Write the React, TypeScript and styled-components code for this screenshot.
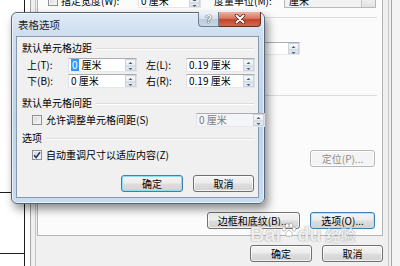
import styled, { createGlobalStyle } from "styled-components";

const GlobalStyle = createGlobalStyle`
  html, body {
    margin: 0;
    padding: 0;
    background: #f3f3f3;
  }
  body {
    font-family: "Noto Sans CJK SC", "Liberation Sans", sans-serif;
    font-size: 10px;
    line-height: 12px;
    color: #000;
  }
`;

const Screen = styled.div`
  position: relative;
  width: 400px;
  height: 266px;
  overflow: hidden;
  display: flex;
  background: #f3f3f3;
`;

/* word document showing at the left edge */
const DocTable = styled.div`
  width: 24px;
  border-right: 1px solid #1c1c1c;
  background: #fff;
`;

const DocCell = styled.div<{ $h: number }>`
  height: ${(p) => p.$h}px;
  border-bottom: 1px solid #1c1c1c;
`;

const DocGap = styled.div`
  width: 5px;
  background: #fff;
`;

/* table properties dialog behind */
const BgFrame = styled.div`
  flex: 1;
  display: flex;
  margin-right: 8px;
  padding: 0 2px 0 4px;
  border-left: 1px solid #a4a4a4;
  border-right: 1px solid #a4a4a4;
  background: #f0f0f0;
`;

const BgBody = styled.div`
  flex: 1;
  display: flex;
  flex-direction: column;
  padding: 0 5px 0 1px;
  border-left: 1px solid #c6c6c6;
  border-right: 1px solid #c6c6c6;
`;

const TabPage = styled.div`
  height: 235px;
  flex-shrink: 0;
  border: 1px solid #b4b4b4;
  border-top: none;
  background: #fbfbfb;
  display: flex;
  flex-direction: column;
`;

const BgRow = styled.div<{ $mt: number; $h: number }>`
  display: flex;
  align-items: center;
  flex-shrink: 0;
  margin-top: ${(p) => p.$mt}px;
  height: ${(p) => p.$h}px;
`;

const BgRule = styled.div<{ $mt: number }>`
  height: 1px;
  flex-shrink: 0;
  margin: ${(p) => p.$mt}px 5px 0 8px;
  background: #dcdcdc;
`;

const Label = styled.div<{ $ml?: number; $w?: number; $dim?: boolean }>`
  margin-left: ${(p) => p.$ml ?? 0}px;
  width: ${(p) => (p.$w ? `${p.$w}px` : "auto")};
  flex-shrink: 0;
  white-space: nowrap;
  color: ${(p) => (p.$dim ? "#8a8a8a" : "#000")};
`;

const Select = styled.div<{ $ml: number; $w: number }>`
  margin-left: ${(p) => p.$ml}px;
  width: ${(p) => p.$w}px;
  height: 14px;
  box-sizing: border-box;
  display: flex;
  border: 1px solid #b8b8b8;
  background: #f2f2f2;
  padding-left: 4px;
  align-items: center;
`;

const SelectArrow = styled.div`
  margin-left: auto;
  width: 13px;
  height: 100%;
  border-left: 1px solid #c4c4c4;
  background: linear-gradient(#f6f6f6, #e2e2e2);
`;

const Button = styled.div<{
  $ml?: number;
  $w: number;
  $kind?: "default" | "focus" | "disabled";
}>`
  margin-left: ${(p) => p.$ml ?? 0}px;
  width: ${(p) => p.$w}px;
  height: 17px;
  box-sizing: border-box;
  flex-shrink: 0;
  display: flex;
  align-items: center;
  justify-content: center;
  border-radius: 3px;
  white-space: nowrap;
  border: 1px solid
    ${(p) =>
      p.$kind === "default" || p.$kind === "focus"
        ? "#3c7fb1"
        : p.$kind === "disabled"
        ? "#b5b9bc"
        : "#707070"};
  color: ${(p) => (p.$kind === "disabled" ? "#8d8d8d" : "#000")};
  background: ${(p) =>
    p.$kind === "disabled"
      ? "#f4f4f4"
      : "linear-gradient(#f4f4f4 0%, #ececec 48%, #dedede 52%, #d2d2d2 100%)"};
  box-shadow: ${(p) =>
    p.$kind === "default"
      ? "inset 0 0 0 1px #8fdcf6"
      : p.$kind === "focus"
      ? "inset 0 0 0 1px #a8e6fa"
      : "inset 0 0 0 1px rgba(255,255,255,0.7)"};
`;

const BottomRow = styled.div`
  display: flex;
  justify-content: flex-end;
  gap: 10px;
  margin-top: 9px;
`;

/* the modal options dialog */
const Modal = styled.div`
  position: absolute;
  left: 11px;
  top: 12px;
  width: 254px;
  height: 192px;
  box-sizing: border-box;
  display: flex;
  flex-direction: column;
  border: 1px solid #56677a;
  border-radius: 6px;
  background: linear-gradient(
    180deg,
    #dfeaf6 0%,
    #cddeef 12%,
    #bed3ea 55%,
    #c9dcf0 100%
  );
  box-shadow: inset 0 0 0 1px rgba(255, 255, 255, 0.6),
    3px 5px 10px rgba(0, 0, 0, 0.45);
`;

const TitleBar = styled.div`
  height: 23px;
  flex-shrink: 0;
  display: flex;
  align-items: flex-start;
  padding-left: 6px;
`;

const Title = styled.div`
  margin-top: 6px;
  font-size: 10.5px;
  color: #1e1e1e;
`;

const HelpButton = styled.div`
  margin-left: auto;
  margin-top: -1px;
  width: 21px;
  height: 15px;
  box-sizing: border-box;
  border: 1px solid #6c7d90;
  border-top: none;
  border-radius: 0 0 0 4px;
  background: linear-gradient(#eef3f9 0%, #d5e0ec 50%, #bccbdc 52%, #c9d7e6 100%);
  display: flex;
  align-items: center;
  justify-content: center;
  font-family: "Liberation Sans", sans-serif;
  font-weight: bold;
  font-size: 11px;
  color: #fff;
  text-shadow: 0 0 1px #2d3a48, 0 0 1px #2d3a48;
`;

const CloseButton = styled.div`
  margin-top: -1px;
  margin-right: 3px;
  width: 42px;
  height: 15px;
  box-sizing: border-box;
  border: 1px solid #6b2a1f;
  border-top: none;
  border-left: none;
  border-radius: 0 0 4px 0;
  background: linear-gradient(#eab2a5 0%, #d8775f 45%, #c3432a 55%, #d26a4c 100%);
  display: flex;
  align-items: center;
  justify-content: center;
`;

const Client = styled.div`
  flex: 1;
  margin: 0 5px 5px 4px;
  border: 1px solid #8799ae;
  background: #f0f0f0;
  padding: 0 2px 0 5px;
  display: flex;
  flex-direction: column;
`;

const GroupHead = styled.div<{ $mt: number }>`
  display: flex;
  align-items: center;
  height: 12px;
  margin-top: ${(p) => p.$mt}px;
`;

const GroupLine = styled.div`
  flex: 1;
  height: 1px;
  margin: 1px 2px 0 4px;
  background: #d8dde2;
  border-bottom: 1px solid #fff;
`;

const Row = styled.div<{ $mt: number }>`
  display: flex;
  align-items: center;
  height: 14px;
  margin-top: ${(p) => p.$mt}px;
`;

const SpinBox = styled.div<{ $ml?: number; $w: number; $h?: number; $off?: boolean }>`
  margin-left: ${(p) => p.$ml ?? 0}px;
  width: ${(p) => p.$w}px;
  height: ${(p) => p.$h ?? 14}px;
  flex-shrink: 0;
  box-sizing: border-box;
  display: flex;
  align-items: stretch;
  border: 1px solid;
  border-color: #abadb3 #dbdfe6 #e3e9ef #e2e3ea;
  background: ${(p) => (p.$off ? "#f3f5f8" : "#fff")};
  color: ${(p) => (p.$off ? "#7c7c7c" : "#000")};
`;

const SpinText = styled.div`
  flex: 1;
  padding-left: 2px;
  white-space: nowrap;
  overflow: hidden;
  display: flex;
  align-items: center;
`;

const Selected = styled.span`
  background: #3399ff;
  color: #fff;
  padding: 0 1px;
  margin-right: 3px;
`;

const SpinArrows = styled.div`
  width: 11px;
  flex-shrink: 0;
  display: flex;
  box-sizing: border-box;
  border: 1px solid #cdd3da;
  background: linear-gradient(#f7f9fb, #dfe5ec);
`;

const CheckBox = styled.div<{ $ml: number }>`
  margin-left: ${(p) => p.$ml}px;
  width: 10px;
  height: 10px;
  flex-shrink: 0;
  box-sizing: border-box;
  border: 1px solid #8e8f8f;
  background: linear-gradient(135deg, #d3d3d3, #fbfbfb);
  box-shadow: inset 0 0 0 1px #f2f2f2;
  display: flex;
  align-items: center;
  justify-content: center;
`;

const ButtonRow = styled.div`
  display: flex;
  justify-content: flex-end;
  gap: 10px;
  margin-top: 13px;
  padding-right: 2px;
`;

const Watermark = styled.div`
  position: absolute;
  left: 250px;
  top: 222px;
  display: flex;
  align-items: flex-end;
  font-family: "Liberation Sans", sans-serif;
  font-weight: bold;
  font-size: 20px;
  line-height: 20px;
  color: rgba(255, 255, 255, 0.85);
  text-shadow: 0 0 1px rgba(90, 90, 90, 0.55), 0 0 2px rgba(120, 120, 120, 0.35);
`;

const WatermarkCjk = styled.span`
  margin-left: 4px;
  font-family: "Noto Sans CJK SC", sans-serif;
  font-size: 15px;
  line-height: 18px;
`;

const Spin = () => (
  <SpinArrows>
    <svg width="9" height="12" viewBox="0 0 9 12">
      <line x1="0" y1="6" x2="9" y2="6" stroke="#c7ced6" />
      <path d="M2.5 4 L4.5 2 L6.5 4 Z" fill="#4a5d80" />
      <path d="M2.5 8 L4.5 10 L6.5 8 Z" fill="#4a5d80" />
    </svg>
  </SpinArrows>
);

const Tick = () => (
  <svg width="8" height="8" viewBox="0 0 8 8">
    <path
      d="M1 4.2 L3.1 6.4 L7 1.2"
      fill="none"
      stroke="#1f3a86"
      strokeWidth="1.6"
    />
  </svg>
);

const Paw = () => (
  <svg width="16" height="16" viewBox="0 0 16 16" style={{ margin: "0 0 6px 0" }}>
    <g fill="rgba(255,255,255,0.85)" stroke="rgba(110,110,110,0.5)" strokeWidth="0.8">
      <ellipse cx="3" cy="7" rx="1.8" ry="2.2" />
      <ellipse cx="6.3" cy="3.5" rx="1.8" ry="2.3" />
      <ellipse cx="10" cy="3.5" rx="1.8" ry="2.3" />
      <ellipse cx="13.2" cy="7" rx="1.8" ry="2.2" />
      <path d="M4.5 13 C5 9.5 7 8.5 8 8.5 C9 8.5 11 9.5 11.5 13 C11 15 5 15 4.5 13 Z" />
    </g>
  </svg>
);

const App = () => {
  return (
    <>
      <GlobalStyle />
      <Screen>
        <DocTable>
          <DocCell $h={192} />
          <DocCell $h={60} />
        </DocTable>
        <DocGap />
        <BgFrame>
          <BgBody>
            <TabPage>
              <BgRow $mt={-6} $h={14}>
                <CheckBox $ml={10} />
                <Label $ml={3} $w={77}>
                  指定宽度(W):
                </Label>
                <SpinBox $w={63} $h={13}>
                  <SpinText>0 厘米</SpinText>
                  <Spin />
                </SpinBox>
                <Label $ml={13} $w={70}>
                  度量单位(M):
                </Label>
                <Select $ml={0} $w={92}>
                  厘米
                  <SelectArrow />
                </Select>
              </BgRow>
              <BgRule $mt={9} />
              <BgRow $mt={10} $h={10}>
                <Label $ml={183}>左缩进(I):</Label>
              </BgRow>
              <BgRow $mt={4} $h={13}>
                <SpinBox $ml={183} $w={79} $h={13}>
                  <SpinText>0 厘米</SpinText>
                  <Spin />
                </SpinBox>
              </BgRow>
              <BgRule $mt={40} />
              <BgRow $mt={54} $h={17}>
                <Button $ml={272} $w={65} $kind="disabled">
                  定位(P)...
                </Button>
              </BgRow>
              <BgRow $mt={45} $h={17}>
                <Button $ml={169} $w={93}>
                  边框和底纹(B)...
                </Button>
                <Button $ml={10} $w={65} $kind="focus">
                  选项(O)...
                </Button>
              </BgRow>
            </TabPage>
            <BottomRow>
              <Button $w={62}>确定</Button>
              <Button $w={61}>取消</Button>
            </BottomRow>
          </BgBody>
        </BgFrame>

        <Watermark>
          Bai
          <Paw />
          du
          <WatermarkCjk>经验</WatermarkCjk>
        </Watermark>

        <Modal>
          <TitleBar>
            <Title>表格选项</Title>
            <HelpButton>?</HelpButton>
            <CloseButton>
              <svg width="14" height="10" viewBox="0 0 14 10">
                <path
                  d="M3.5 1.5 L10.5 8.5 M10.5 1.5 L3.5 8.5"
                  stroke="#5a1a10"
                  strokeWidth="3.4"
                  strokeLinecap="round"
                />
                <path
                  d="M3.5 1.5 L10.5 8.5 M10.5 1.5 L3.5 8.5"
                  stroke="#fff"
                  strokeWidth="2"
                  strokeLinecap="round"
                />
              </svg>
            </CloseButton>
          </TitleBar>
          <Client>
            <GroupHead $mt={5}>
              默认单元格边距
              <GroupLine />
            </GroupHead>
            <Row $mt={4}>
              <Label $ml={5} $w={41}>
                上(T):
              </Label>
              <SpinBox $w={69}>
                <SpinText>
                  <Selected>0</Selected>厘米
                </SpinText>
                <Spin />
              </SpinBox>
              <Label $ml={9} $w={40}>
                左(L):
              </Label>
              <SpinBox $w={69}>
                <SpinText>0.19 厘米</SpinText>
                <Spin />
              </SpinBox>
            </Row>
            <Row $mt={2}>
              <Label $ml={5} $w={41}>
                下(B):
              </Label>
              <SpinBox $w={69}>
                <SpinText>0 厘米</SpinText>
                <Spin />
              </SpinBox>
              <Label $ml={9} $w={40}>
                右(R):
              </Label>
              <SpinBox $w={69}>
                <SpinText>0.19 厘米</SpinText>
                <Spin />
              </SpinBox>
            </Row>
            <GroupHead $mt={9}>
              默认单元格间距
              <GroupLine />
            </GroupHead>
            <Row $mt={4}>
              <CheckBox $ml={10} />
              <Label $ml={4} $w={150}>
                允许调整单元格间距(S)
              </Label>
              <SpinBox $ml={0} $w={69} $off>
                <SpinText>0 厘米</SpinText>
                <Spin />
              </SpinBox>
            </Row>
            <GroupHead $mt={5}>
              选项
              <GroupLine />
            </GroupHead>
            <Row $mt={4}>
              <CheckBox $ml={10}>
                <Tick />
              </CheckBox>
              <Label $ml={4}>自动重调尺寸以适应内容(Z)</Label>
            </Row>
            <ButtonRow>
              <Button $w={62} $kind="default">
                确定
              </Button>
              <Button $w={61}>取消</Button>
            </ButtonRow>
          </Client>
        </Modal>
      </Screen>
    </>
  );
};

export default App;
